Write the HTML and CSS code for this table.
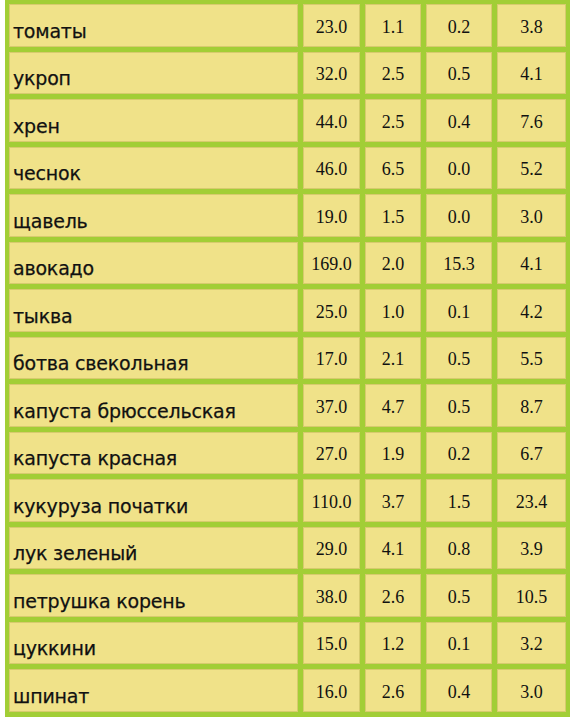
FILE: index.html
```html
<!DOCTYPE html>
<html lang="ru">
<head>
<meta charset="utf-8">
<title>Овощи</title>
<link rel="stylesheet" href="styles.css">
</head>
<body>
<div class="table">
  <div class="name">томаты</div><div class="num">23.0</div><div class="num">1.1</div><div class="num">0.2</div><div class="num">3.8</div>
  <div class="name">укроп</div><div class="num">32.0</div><div class="num">2.5</div><div class="num">0.5</div><div class="num">4.1</div>
  <div class="name">хрен</div><div class="num">44.0</div><div class="num">2.5</div><div class="num">0.4</div><div class="num">7.6</div>
  <div class="name">чеснок</div><div class="num">46.0</div><div class="num">6.5</div><div class="num">0.0</div><div class="num">5.2</div>
  <div class="name">щавель</div><div class="num">19.0</div><div class="num">1.5</div><div class="num">0.0</div><div class="num">3.0</div>
  <div class="name">авокадо</div><div class="num">169.0</div><div class="num">2.0</div><div class="num">15.3</div><div class="num">4.1</div>
  <div class="name">тыква</div><div class="num">25.0</div><div class="num">1.0</div><div class="num">0.1</div><div class="num">4.2</div>
  <div class="name">ботва свекольная</div><div class="num">17.0</div><div class="num">2.1</div><div class="num">0.5</div><div class="num">5.5</div>
  <div class="name">капуста брюссельская</div><div class="num">37.0</div><div class="num">4.7</div><div class="num">0.5</div><div class="num">8.7</div>
  <div class="name">капуста красная</div><div class="num">27.0</div><div class="num">1.9</div><div class="num">0.2</div><div class="num">6.7</div>
  <div class="name">кукуруза початки</div><div class="num">110.0</div><div class="num">3.7</div><div class="num">1.5</div><div class="num">23.4</div>
  <div class="name">лук зеленый</div><div class="num">29.0</div><div class="num">4.1</div><div class="num">0.8</div><div class="num">3.9</div>
  <div class="name">петрушка корень</div><div class="num">38.0</div><div class="num">2.6</div><div class="num">0.5</div><div class="num">10.5</div>
  <div class="name">цуккини</div><div class="num">15.0</div><div class="num">1.2</div><div class="num">0.1</div><div class="num">3.2</div>
  <div class="name">шпинат</div><div class="num">16.0</div><div class="num">2.6</div><div class="num">0.4</div><div class="num">3.0</div>
</div>
</body>
</html>
```

FILE: styles.css
```css
html, body {
  margin: 0;
  padding: 0;
  background: #ffffff;
}

.table {
  margin-left: 5px;
  width: 565px;
  box-sizing: border-box;
  padding: 4px 4px 5px 4px;
  background: #a2ce36;
  display: grid;
  grid-template-columns: 289px 57px 56px 66px 69px;
  grid-auto-rows: 42.5px;
  gap: 5px;
}

.table > div {
  background: #f0e289;
  box-shadow: inset 0 0 0 1px rgba(170, 160, 60, 0.35);
  display: flex;
  align-items: center;
  box-sizing: border-box;
  color: #111;
}

.name {
  padding-left: 4px;
  padding-top: 11px;
  font-family: "DejaVu Sans", "Noto Sans", sans-serif;
  font-size: 19px;
  letter-spacing: -0.2px;
  -webkit-text-stroke: 0.25px #111;
}

.num {
  justify-content: center;
  padding-top: 4px;
  font-family: "Liberation Serif", "Times New Roman", serif;
  font-size: 18px;
}
```
